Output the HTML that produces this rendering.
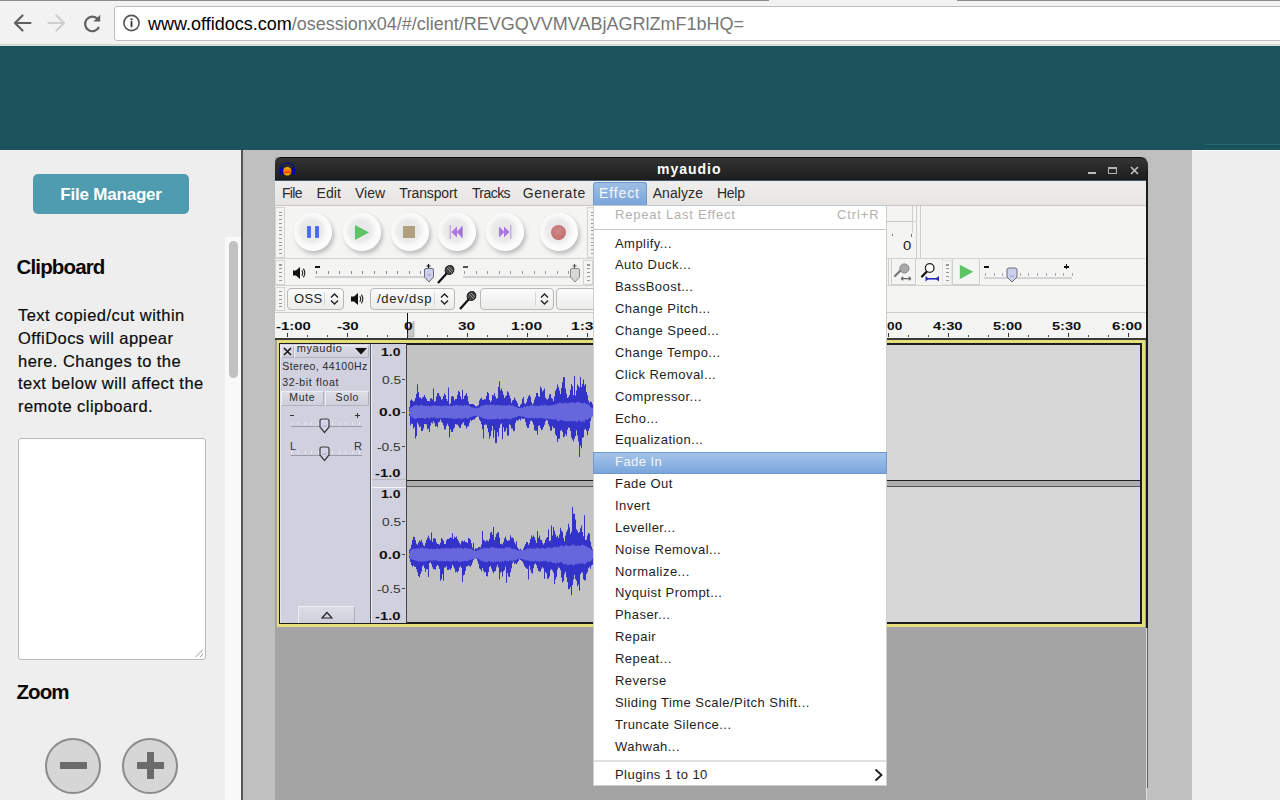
<!DOCTYPE html>
<html><head><meta charset="utf-8">
<style>

*{margin:0;padding:0;box-sizing:border-box}
html,body{width:1280px;height:800px;overflow:hidden;background:#eee;font-family:"Liberation Sans",sans-serif}
.a{position:absolute}
#chrome{left:0;top:0;width:1280px;height:46px;background:#f2f2f2}
#topline1{left:0;top:0;width:769px;height:1px;background:#8f8b8b}
#topline2{left:957px;top:0;width:323px;height:1px;background:#8f8b8b}
#addr{left:114px;top:6px;width:1180px;height:35px;background:#fff;border:1px solid #bdbdbd;border-radius:3px}
#url{left:148px;top:14px;font-size:18px;color:#000;white-space:nowrap}
#url span{color:#777}
#chromeb{left:0;top:44px;width:1280px;height:2px;background:linear-gradient(#d3cfcf 50%,#e4e0e0 50%)}
#teal{left:0;top:46px;width:1280px;height:104px;background:#1a535c}
#left{left:0;top:150px;width:241px;height:650px;background:#eeeeee}
#sep{left:241px;top:150px;width:2px;height:650px;background:#555}
#grey{left:243px;top:150px;width:949px;height:650px;background:#c0c0c0}
#right{left:1192px;top:150px;width:88px;height:650px;background:#eeeeee}
#fm{left:33px;top:174px;width:156px;height:40px;background:#4f9bb0;border-radius:5px;color:#fff;font-weight:bold;font-size:17px;text-align:center;line-height:42px;letter-spacing:-0.2px}


.t{position:absolute;white-space:nowrap;color:#0a0a0a}
#para{-webkit-text-stroke:0.2px #111}
#clip{left:16.5px;top:255px;font-size:20.5px;font-weight:bold;letter-spacing:-0.85px}
#para{left:18px;top:304px;font-size:16.5px;letter-spacing:0.45px;line-height:22.8px;white-space:normal;width:210px}
#para div{white-space:nowrap}
#ta{left:18px;top:438px;width:188px;height:222px;background:#fff;border:1px solid #b9b9b9;border-radius:3px}
#zoomh{left:16.5px;top:680px;font-size:20.5px;font-weight:bold;letter-spacing:-0.9px}
.zc{position:absolute;width:56px;height:56px;border-radius:50%;background:#d6d6d6;border:2px solid #8c8c8c}
.bar{position:absolute;background:#6b6b6b}
#track{left:225px;top:237px;width:16px;height:563px;background:#f9f9f9}
#thumb{left:229px;top:241px;width:9px;height:137px;background:#c2c2c2;border-radius:5px}

.w{position:absolute}
.au{font-family:"Liberation Sans",sans-serif;position:absolute;white-space:nowrap}
#win{left:275px;top:157px;width:871px;height:643px;background:#a4a4a4}
#winr{left:1146px;top:170px;width:1.5px;height:458px;background:#1a1a1a}
#winr2{left:1147px;top:628px;width:1px;height:160px;background:#5e5e5e}
#winr3{left:1146px;top:628px;width:1px;height:172px;background:#dcdcdc}
#title{left:275px;top:157px;width:872.5px;height:24px;background:linear-gradient(#343434,#2a2a2a 40%,#1c1c1c);border-top:1px solid #0a0a0a;border-radius:6px 8px 0 0}
#titleline{left:275px;top:180px;width:871px;height:1px;background:#3f5672}
#ttext{left:657px;top:161px;font-size:14px;font-weight:bold;color:#fff;letter-spacing:1px}
#menubar{left:275px;top:181px;width:871px;height:25px;background:linear-gradient(#efeeed,#e6e5e3);border-bottom:1px solid #c8c7c5}
.mi{position:absolute;top:185px;font-size:14px;color:#2a2a2a}
#effhl{left:593px;top:182px;width:54px;height:23px;background:linear-gradient(#9dbfe6,#79a5d8);border:1px solid #6f98cc;border-bottom:none;border-radius:3px 3px 0 0}
#tb{left:275px;top:206px;width:871px;height:106px;background:#f4f4f3}
.hl{position:absolute;height:1px;background:#cfcfcd}
.vl{position:absolute;width:1px;background:#cfcfcd}
.grip{position:absolute;width:10px;border:1px solid #d4d4d2;background:#f4f4f3}.grip:after{content:'';position:absolute;left:3px;right:2px;top:2px;bottom:2px;background:repeating-linear-gradient(#f4f4f3 0,#f4f4f3 1.5px,#9a9a9a 1.5px,#9a9a9a 2.5px,#f4f4f3 2.5px,#f4f4f3 3.75px)}
.btn{position:absolute;width:38px;height:38px;border-radius:50%;background:radial-gradient(circle at 46% 46%,#e6e6e6 0,#ebebeb 11px,#f6f6f6 14px,#fcfcfc 18px);box-shadow:2px 3px 4px #bcbcbc}
#ruler{left:275px;top:312px;width:871px;height:26px;background:#f4f4f3;border-top:1px solid #cdcdcb}
#rulerb{left:275px;top:338px;width:871px;height:2px;background:#3a3a3a}
.rn{position:absolute;top:320px;font-size:11px;font-weight:bold;color:#111;transform-origin:0 0}
.tick{position:absolute;width:1px;background:#444}
#trk{left:277px;top:340px;width:867.5px;height:287px;background:#e3df7c}
#trkin{left:279px;top:343px;width:862.5px;height:281px;background:#1c1c1c}
.info{position:absolute;background:#d0d0de}
.vr{position:absolute;background:#d0d0de}
.wbg{position:absolute;background:#c3c3c3}
.obg{position:absolute;background:#d7d7d7}
.vrt{position:absolute;font-size:11px;color:#333;transform-origin:0 0}
.vrb{position:absolute;font-size:11px;font-weight:bold;color:#111;transform-origin:0 0}
.it{position:absolute;font-size:10px;color:#2a2a2a;white-space:nowrap}
.pbtn{position:absolute;background:linear-gradient(#dcdce6,#cfcfdc);border:1px solid #b0b0c0;border-top-color:#eeeef4;border-left-color:#eeeef4}
#menu{left:593px;top:205px;width:294px;height:581px;background:#fff;border:1px solid #cfcfcf;border-top:1px solid #b9c6d6}
.me{position:absolute;left:615px;font-size:13px;color:#1e1e1e;letter-spacing:0.4px}
#fadehl{left:593px;top:452px;width:294px;height:22px;background:linear-gradient(#a4c3ea,#7aa6db);border:1px solid #6e99cf}
.combo{position:absolute;height:22px;border:1px solid #b8b8b6;border-radius:4px;background:linear-gradient(#fbfbfb,#ececeb)}
.ct{position:absolute;font-size:13px;color:#222;letter-spacing:0.3px}

</style></head><body>

<div id="chrome" class="a"></div>
<div id="topline1" class="a"></div>
<div id="topline2" class="a"></div>
<div id="addr" class="a"></div>
<div id="url" class="a">www.offidocs.com<span>/osessionx04/#/client/REVGQVVMVABjAGRlZmF1bHQ=</span></div>
<div id="chromeb" class="a"></div>
<svg class="a" style="left:0;top:0" width="150" height="45" viewBox="0 0 150 45">
<path d="M22.5 15.5 L15 23 L22.5 30.5 M15 23 H30.5" stroke="#606060" stroke-width="2.2" fill="none" stroke-linecap="round" stroke-linejoin="round"/>
<path d="M56.5 15.5 L64 23 L56.5 30.5 M64 23 H48.5" stroke="#cfcfcf" stroke-width="2.2" fill="none" stroke-linecap="round" stroke-linejoin="round"/>
<path d="M99 27 A7.3 7.3 0 1 1 97.6 18.8" stroke="#606060" stroke-width="2.2" fill="none"/>
<path d="M100.2 14.8 V21.6 H93.4 Z" fill="#606060"/>
<circle cx="131.5" cy="23" r="7.6" stroke="#555" stroke-width="1.6" fill="none"/>
<circle cx="131.5" cy="19.3" r="1.1" fill="#333"/>
<rect x="130.6" y="21.2" width="1.8" height="6" fill="#333"/>
</svg>
<div id="teal" class="a"></div>
<div id="left" class="a"></div>
<div id="sep" class="a"></div>
<div id="grey" class="a"></div>
<div id="right" class="a"></div>
<div class="a" style="left:1206px;top:144px;width:74px;height:1px;background:#2b6a73"></div>
<div class="a" style="left:1206px;top:145px;width:74px;height:1px;background:#154a52"></div>
<div class="a" style="left:1192px;top:150px;width:88px;height:1px;background:#f8f8f8"></div>
<div id="fm" class="a">File Manager</div>

<div id="track" class="a"></div>
<div id="thumb" class="a"></div>
<div id="clip" class="t">Clipboard</div>
<div id="para" class="t"><div>Text copied/cut within</div><div>OffiDocs will appear</div><div>here. Changes to the</div><div>text below will affect the</div><div>remote clipboard.</div></div>
<div id="ta" class="a"></div>
<svg class="a" style="left:194px;top:648px" width="10" height="10" viewBox="0 0 10 10"><path d="M1.5 9 L9 1.5 M6 9 L9 6" stroke="#9a9a9a" stroke-width="1"/></svg>
<div id="zoomh" class="t">Zoom</div>
<div class="zc" style="left:45px;top:738px"></div>
<div class="bar" style="left:60px;top:762px;width:27px;height:7px"></div>
<div class="zc" style="left:122px;top:738px"></div>
<div class="bar" style="left:137px;top:762px;width:27px;height:7px"></div>
<div class="bar" style="left:147px;top:752px;width:7px;height:27px"></div>


<div id="win" class="w"></div>
<div id="title" class="w"></div>
<div id="titleline" class="w"></div>
<svg class="w" style="left:279px;top:162px" width="17" height="15" viewBox="0 0 17 15">
<defs><linearGradient id="blob" x1="0" y1="0" x2="0" y2="1"><stop offset="0" stop-color="#f0b400"/><stop offset="0.45" stop-color="#f07a00"/><stop offset="0.62" stop-color="#f03c08"/><stop offset="0.8" stop-color="#f0a000"/><stop offset="1" stop-color="#f0d000"/></linearGradient></defs>
<path d="M2 8 C1.8 3 4.6 0.9 8.5 0.9 C12.4 0.9 15.2 3 15 8" fill="none" stroke="#0e1478" stroke-width="1.5"/>
<ellipse cx="2.5" cy="9" rx="1.9" ry="3.8" fill="#0204a8"/>
<ellipse cx="14.5" cy="9" rx="1.9" ry="3.8" fill="#0204a8"/>
<ellipse cx="8.3" cy="9.3" rx="4.2" ry="4.3" fill="url(#blob)"/>
</svg>
<div id="ttext" class="au">myaudio</div>
<div class="w" style="left:1088px;top:172px;width:8px;height:2px;background:#bdbdbd"></div>
<div class="w" style="left:1108px;top:166.5px;width:9px;height:7.5px;border:1.5px solid #b4b4b4;border-top-width:2px"></div>
<svg class="w" style="left:1129.5px;top:166px" width="9" height="9" viewBox="0 0 9 9"><path d="M1 1 L8 8 M8 1 L1 8" stroke="#c4c4c4" stroke-width="1.6"/></svg>
<div id="winr" class="w"></div><div id="winr2" class="w"></div><div id="winr3" class="w"></div>
<div id="menubar" class="w"></div>
<div id="effhl" class="w"></div>
<div id="tb" class="w"></div>
<!-- toolbar rows -->
<div class="hl" style="left:275px;top:258px;width:870px;background:#d2d2d0"></div>
<div class="hl" style="left:275px;top:285px;width:870px;background:#d2d2d0"></div>
<div class="grip" style="left:275px;top:207px;height:51px"></div>
<div class="grip" style="left:275px;top:260px;height:25px"></div>
<div class="grip" style="left:275px;top:287px;height:24px"></div>
<div class="grip" style="left:587px;top:207px;height:51px"></div>
<div class="grip" style="left:583px;top:260px;height:25px"></div>
<!-- transport buttons -->
<div class="btn" style="left:294px;top:213px"></div>
<div class="btn" style="left:343px;top:213px"></div>
<div class="btn" style="left:391px;top:213px"></div>
<div class="btn" style="left:438px;top:213px"></div>
<div class="btn" style="left:486px;top:213px"></div>
<div class="btn" style="left:540px;top:213px"></div>
<div class="w" style="left:307px;top:226px;width:4px;height:12px;background:#4c6ee8;border-radius:1px"></div>
<div class="w" style="left:315px;top:226px;width:4px;height:12px;background:#4c6ee8;border-radius:1px"></div>
<svg class="w" style="left:354px;top:224px" width="16" height="17" viewBox="0 0 16 17"><path d="M1 1 L15 8.5 L1 16 Z" fill="#5cc464"/></svg>
<div class="w" style="left:403px;top:226px;width:12px;height:12px;background:#b0a080"></div>
<svg class="w" style="left:449px;top:225px" width="15" height="14" viewBox="0 0 15 14"><rect x="0.5" y="0" width="1.6" height="14" fill="#c8a8f0"/><path d="M2.5 7 L8 1.5 L8 12.5 Z M7.5 7 L13 1.5 L13 12.5 Z" fill="#a878e0"/><rect x="12.5" y="1" width="1.5" height="12" fill="#604080" opacity="0.4"/></svg>
<svg class="w" style="left:497px;top:225px" width="15" height="14" viewBox="0 0 15 14"><rect x="12.9" y="0" width="1.6" height="14" fill="#c8a8f0"/><path d="M12.5 7 L7 1.5 L7 12.5 Z M7.5 7 L2 1.5 L2 12.5 Z" fill="#a878e0"/></svg>
<div class="w" style="left:551px;top:225px;width:15px;height:15px;border-radius:50%;background:radial-gradient(circle at 45% 40%,#d08888,#c07070 70%,#a05858)"></div>
<!-- mixer row -->
<svg class="w" style="left:292px;top:266px" width="14" height="14" viewBox="0 0 14 14"><path d="M1 4.5 H4 L8 1 V13 L4 9.5 H1 Z" fill="#111"/><path d="M9.8 4.2 Q11.6 7 9.8 9.8 M11.4 2.6 Q14.2 7 11.4 11.4" stroke="#222" stroke-width="1.1" fill="none"/></svg>
<div class="w" style="left:315px;top:266px;width:5px;height:1.5px;background:#111"></div>
<div class="w" style="left:315px;top:276px;width:117px;height:2px;background:#d2d2d2"></div>
<div class="w" style="left:316px;top:271px;width:116px;height:3px;background:repeating-linear-gradient(90deg,#888 0,#888 1px,transparent 1px,transparent 11.6px)"></div>
<svg class="w" style="left:423px;top:264px" width="12" height="20" viewBox="0 0 12 20"><path d="M3.5 2 H7.5 M5.5 0 V4" stroke="#111" stroke-width="1.2"/><path d="M1.5 6 Q1.5 4.5 3 4.5 H9 Q10.5 4.5 10.5 6 V13 L6 18 L1.5 13 Z" fill="#ccd0ea" stroke="#6a6a7a" stroke-width="1"/><path d="M4 11 H8" stroke="#9aa0c0"/></svg>
<svg class="w" style="left:436px;top:264px" width="20" height="20" viewBox="0 0 20 20"><path d="M2 19 L11 9" stroke="#111" stroke-width="2.2"/><ellipse cx="13.5" cy="6" rx="4.2" ry="4.6" transform="rotate(45 13.5 6)" fill="#444" stroke="#111" stroke-width="1"/><path d="M11 4 L16 9 M12.5 2.8 L17 7.2" stroke="#aaa" stroke-width="0.8"/></svg>
<div class="w" style="left:463px;top:266px;width:5px;height:1.5px;background:#555"></div>
<div class="w" style="left:463px;top:276px;width:113px;height:2px;background:#d2d2d2"></div>
<div class="w" style="left:464px;top:271px;width:110px;height:3px;background:repeating-linear-gradient(90deg,#999 0,#999 1px,transparent 1px,transparent 11.6px)"></div>
<svg class="w" style="left:569px;top:264px" width="12" height="20" viewBox="0 0 12 20"><path d="M3.5 2 H7.5 M5.5 0 V4" stroke="#555" stroke-width="1.2"/><path d="M1.5 6 Q1.5 4.5 3 4.5 H9 Q10.5 4.5 10.5 6 V13 L6 18 L1.5 13 Z" fill="#d8d8d8" stroke="#8a8a8a" stroke-width="1"/></svg>
<!-- device row -->
<div class="combo" style="left:287px;top:288px;width:57px"></div>
<div class="vl" style="left:324px;top:292px;height:14px;background:#d8d8d8"></div>
<div class="ct" style="left:294px;top:291px">OSS</div>
<svg class="w" style="left:330px;top:293px" width="9" height="12" viewBox="0 0 9 12"><path d="M1 4.5 L4.5 1 L8 4.5 M1 7.5 L4.5 11 L8 7.5" stroke="#222" stroke-width="1.4" fill="none"/></svg>
<svg class="w" style="left:350px;top:292px" width="14" height="14" viewBox="0 0 14 14"><path d="M1 4.5 H4 L8 1 V13 L4 9.5 H1 Z" fill="#111"/><path d="M9.8 4.2 Q11.6 7 9.8 9.8 M11.4 2.6 Q14.2 7 11.4 11.4" stroke="#222" stroke-width="1.1" fill="none"/></svg>
<div class="combo" style="left:370px;top:288px;width:85px"></div>
<div class="vl" style="left:434px;top:292px;height:14px;background:#d8d8d8"></div>
<div class="ct" style="left:377px;top:291px;letter-spacing:0.75px">/dev/dsp</div>
<svg class="w" style="left:440px;top:293px" width="9" height="12" viewBox="0 0 9 12"><path d="M1 4.5 L4.5 1 L8 4.5 M1 7.5 L4.5 11 L8 7.5" stroke="#222" stroke-width="1.4" fill="none"/></svg>
<svg class="w" style="left:458px;top:290px" width="20" height="20" viewBox="0 0 20 20"><path d="M2 19 L11 9" stroke="#111" stroke-width="2.2"/><ellipse cx="13.5" cy="6" rx="4.2" ry="4.6" transform="rotate(45 13.5 6)" fill="#444" stroke="#111" stroke-width="1"/><path d="M11 4 L16 9 M12.5 2.8 L17 7.2" stroke="#aaa" stroke-width="0.8"/></svg>
<div class="combo" style="left:480px;top:288px;width:74px"></div>
<div class="vl" style="left:535px;top:292px;height:14px;background:#d8d8d8"></div>
<svg class="w" style="left:540px;top:293px" width="9" height="12" viewBox="0 0 9 12"><path d="M1 4.5 L4.5 1 L8 4.5 M1 7.5 L4.5 11 L8 7.5" stroke="#222" stroke-width="1.4" fill="none"/></svg>
<div class="combo" style="left:556px;top:288px;width:60px"></div>
<!-- ruler -->
<div id="ruler" class="w"></div>
<div id="rulerb" class="w"></div>
<div class="w" style="left:407px;top:313px;width:1px;height:25px;background:#111"></div>
<svg class="w" style="left:408px;top:320px" width="7" height="18" viewBox="0 0 7 18"><path d="M0 8 L6 1 V17 H0 Z" fill="#c8c8c8" stroke="#a0a0a0" stroke-width="0.6"/></svg>
<!-- track -->
<div id="trk" class="w"></div>
<div id="trkin" class="w"></div>
<div class="info" style="left:280px;top:344px;width:90px;height:279px"></div><div class="w" style="left:280px;top:344px;width:1px;height:279px;background:#e4e4ee"></div>
<div class="w" style="left:370px;top:344px;width:1px;height:279px;background:#555"></div>
<div class="w" style="left:371px;top:344px;width:1px;height:279px;background:#eeeef4"></div>
<div class="vr" style="left:372px;top:344px;width:34px;height:279px"></div>
<div class="w" style="left:406px;top:344px;width:1px;height:279px;background:#444"></div>
<div class="wbg" style="left:407px;top:345px;width:733px;height:135px"></div>
<div class="wbg" style="left:407px;top:487px;width:733px;height:135px"></div>
<div class="obg" style="left:600px;top:345px;width:540px;height:135px"></div>
<div class="obg" style="left:600px;top:487px;width:540px;height:135px"></div>
<div class="w" style="left:407px;top:481px;width:733px;height:5px;background:#adadad"></div>
<div class="w" style="left:407px;top:486px;width:733px;height:1px;background:#555"></div>
<div class="w" style="left:372px;top:479px;width:34px;height:1px;background:#b8b8c0"></div>
<div class="w" style="left:372px;top:487px;width:34px;height:1px;background:#f4f4f8"></div>
<!-- info panel contents -->
<div class="pbtn" style="left:281px;top:345px;width:13px;height:13px"></div>
<svg class="w" style="left:283px;top:347px" width="9" height="9" viewBox="0 0 9 9"><path d="M1 1 L8 8 M8 1 L1 8" stroke="#111" stroke-width="1.5"/></svg>
<div class="pbtn" style="left:294px;top:345px;width:75px;height:13px"></div>

<svg class="w" style="left:355px;top:348px" width="12" height="7" viewBox="0 0 12 7"><path d="M0 0 H12 L6 6.5 Z" fill="#111"/></svg>


<div class="pbtn" style="left:281px;top:391px;width:43px;height:15px"></div>
<div class="pbtn" style="left:325px;top:391px;width:44px;height:15px"></div>


<div class="w" style="left:290px;top:415px;width:4px;height:1px;background:#333"></div>
<div class="w" style="left:355px;top:415px;width:5px;height:1px;background:#333"></div>
<div class="w" style="left:357px;top:413px;width:1px;height:5px;background:#333"></div>
<div class="w" style="left:291px;top:426px;width:71px;height:1px;background:#9a9aa8"></div>
<div class="w" style="left:291px;top:422px;width:71px;height:3px;background:repeating-linear-gradient(90deg,#eaeaf0 0,#eaeaf0 1px,transparent 1px,transparent 6.8px)"></div>
<svg class="w" style="left:319px;top:418px" width="11" height="16" viewBox="0 0 11 16"><path d="M1 3 Q1 1 3 1 H8 Q10 1 10 3 V9 L5.5 14.5 L1 9 Z" fill="#d4d4e8" stroke="#3a3a3a" stroke-width="1.2"/><path d="M3.5 8 H7.5" stroke="#a0a0c0"/></svg>
<div class="it" style="left:290px;top:440px;font-size:11px;color:#333">L</div>
<div class="it" style="left:354px;top:440px;font-size:11px;color:#333">R</div>
<div class="w" style="left:291px;top:455px;width:71px;height:1px;background:#9a9aa8"></div>
<div class="w" style="left:291px;top:451px;width:71px;height:3px;background:repeating-linear-gradient(90deg,#eaeaf0 0,#eaeaf0 1px,transparent 1px,transparent 6.8px)"></div>
<svg class="w" style="left:319px;top:446px" width="11" height="16" viewBox="0 0 11 16"><path d="M1 3 Q1 1 3 1 H8 Q10 1 10 3 V9 L5.5 14.5 L1 9 Z" fill="#d4d4e8" stroke="#3a3a3a" stroke-width="1.2"/><path d="M3.5 8 H7.5" stroke="#a0a0c0"/></svg>
<div class="pbtn" style="left:298px;top:606px;width:57px;height:17px;border-bottom:none"></div>
<svg class="w" style="left:321px;top:611px" width="12" height="8" viewBox="0 0 12 8"><path d="M1 7 L6 1.5 L11 7 Z" fill="none" stroke="#222" stroke-width="1.2"/></svg>
<!-- right toolbar parts -->
<div class="w" style="left:887px;top:221px;width:28px;height:1px;background:#c8c8c6"></div>
<div class="w" style="left:912px;top:206px;width:1px;height:27px;background:#d0d0ce"></div>
<div class="w" style="left:892px;top:234px;width:1px;height:2px;background:#777"></div>
<div class="w" style="left:911px;top:234px;width:1px;height:3px;background:#777"></div>
<div class="au" style="left:903px;top:238px;font-size:13.5px;color:#1a1a1a;transform:scaleX(1.1);transform-origin:0 0">0</div>
<div class="w" style="left:916px;top:206px;width:1px;height:52px;background:#cfcfcd"></div>
<div class="w" style="left:920px;top:206px;width:1px;height:52px;background:#cfcfcd"></div>
<div class="w" style="left:888px;top:259px;width:1px;height:26px;background:#cfcfcd"></div>
<div class="w" style="left:891px;top:259px;width:25px;height:26px;border:1px solid #cfcfcd;border-top:none"></div>
<div class="w" style="left:916px;top:259px;width:27px;height:26px;border-right:1px solid #cfcfcd"></div>
<div class="grip" style="left:942px;top:260px;height:25px;border-color:#e4e4e2"></div>
<div class="w" style="left:952px;top:259px;width:28px;height:26px;border:1px solid #cfcfcd;border-top:none"></div>
<svg class="w" style="left:891px;top:259px" width="52" height="26" viewBox="0 0 52 26">
<path d="M4 17 L10 11" stroke="#777" stroke-width="2.2" stroke-linecap="round"/>
<circle cx="13.4" cy="9.5" r="4.6" fill="#a8a8a8" stroke="#888" stroke-width="1"/>
<path d="M10 19.6 H20 M10 19.6 L12.3 17.8 M10 19.6 L12.3 21.4 M20 19.6 L17.7 17.8 M20 19.6 L17.7 21.4" stroke="#666" stroke-width="1.1" fill="none"/>
<path d="M31 17.5 L36.3 12" stroke="#111" stroke-width="2.2" stroke-linecap="round"/>
<circle cx="38.7" cy="9" r="4.3" fill="#fff" stroke="#222" stroke-width="1.3"/>
<path d="M35 19.8 H47.5" stroke="#2828b8" stroke-width="1.6"/>
<path d="M34.5 17 V22.5 L38 19.8 Z M48 17 V22.5 L44.5 19.8 Z" fill="#2828b8"/>
</svg>
<svg class="w" style="left:959px;top:264px" width="15" height="16" viewBox="0 0 15 16"><path d="M0.8 0.8 L14.2 7.8 L0.8 15.2 Z" fill="#5cc464"/></svg>
<div class="w" style="left:984px;top:266px;width:5px;height:1.5px;background:#111"></div>
<div class="w" style="left:1064px;top:266px;width:5px;height:1.5px;background:#111"></div>
<div class="w" style="left:1066px;top:264px;width:1px;height:5px;background:#111"></div>
<div class="w" style="left:984px;top:277px;width:88px;height:2px;background:#d4d4d4"></div>
<div class="w" style="left:985px;top:273px;width:88px;height:3px;background:repeating-linear-gradient(90deg,#aaa 0,#aaa 1px,transparent 1px,transparent 8.7px)"></div>
<svg class="w" style="left:1006px;top:267px" width="12" height="16" viewBox="0 0 12 16"><path d="M1 3 Q1 1 3 1 H9 Q11 1 11 3 V10 L6 15 L1 10 Z" fill="#ccd0ea" stroke="#6a6a7a" stroke-width="1"/><path d="M4 9 H8" stroke="#9aa0c0"/></svg>

<div class="mi" style="left:282px;letter-spacing:-0.686px">File</div>
<div class="mi" style="left:316.5px;letter-spacing:0.125px">Edit</div>
<div class="mi" style="left:355px;letter-spacing:-0.031px">View</div>
<div class="mi" style="left:399.2px;letter-spacing:-0.161px">Transport</div>
<div class="mi" style="left:471.9px;letter-spacing:-0.556px">Tracks</div>
<div class="mi" style="left:522.7px;letter-spacing:0.59px">Generate</div>
<div class="mi" style="left:652.7px;letter-spacing:0.082px">Analyze</div>
<div class="mi" style="left:717px;letter-spacing:-0.264px">Help</div>
<div class="mi" style="left:599px;color:#f4f8fd;letter-spacing:0.892px">Effect</div>
<div class="tick" style="left:287px;top:333px;height:4px;background:#333"></div>
<div class="tick" style="left:307px;top:335px;height:2px;background:#555"></div>
<div class="tick" style="left:327px;top:335px;height:2px;background:#555"></div>
<div class="tick" style="left:347px;top:333px;height:4px;background:#333"></div>
<div class="tick" style="left:367px;top:335px;height:2px;background:#555"></div>
<div class="tick" style="left:387px;top:335px;height:2px;background:#555"></div>
<div class="tick" style="left:407px;top:333px;height:4px;background:#333"></div>
<div class="tick" style="left:427px;top:335px;height:2px;background:#555"></div>
<div class="tick" style="left:447px;top:335px;height:2px;background:#555"></div>
<div class="tick" style="left:467px;top:333px;height:4px;background:#333"></div>
<div class="tick" style="left:487px;top:335px;height:2px;background:#555"></div>
<div class="tick" style="left:507px;top:335px;height:2px;background:#555"></div>
<div class="tick" style="left:527px;top:333px;height:4px;background:#333"></div>
<div class="tick" style="left:547px;top:335px;height:2px;background:#555"></div>
<div class="tick" style="left:567px;top:335px;height:2px;background:#555"></div>
<div class="tick" style="left:587px;top:333px;height:4px;background:#333"></div>
<div class="tick" style="left:607px;top:335px;height:2px;background:#555"></div>
<div class="tick" style="left:627px;top:335px;height:2px;background:#555"></div>
<div class="tick" style="left:647px;top:333px;height:4px;background:#333"></div>
<div class="tick" style="left:667px;top:335px;height:2px;background:#555"></div>
<div class="tick" style="left:687px;top:335px;height:2px;background:#555"></div>
<div class="tick" style="left:707px;top:333px;height:4px;background:#333"></div>
<div class="tick" style="left:727px;top:335px;height:2px;background:#555"></div>
<div class="tick" style="left:747px;top:335px;height:2px;background:#555"></div>
<div class="tick" style="left:767px;top:333px;height:4px;background:#333"></div>
<div class="tick" style="left:788px;top:335px;height:2px;background:#555"></div>
<div class="tick" style="left:808px;top:335px;height:2px;background:#555"></div>
<div class="tick" style="left:828px;top:333px;height:4px;background:#333"></div>
<div class="tick" style="left:848px;top:335px;height:2px;background:#555"></div>
<div class="tick" style="left:868px;top:335px;height:2px;background:#555"></div>
<div class="tick" style="left:888px;top:333px;height:4px;background:#333"></div>
<div class="tick" style="left:908px;top:335px;height:2px;background:#555"></div>
<div class="tick" style="left:928px;top:335px;height:2px;background:#555"></div>
<div class="tick" style="left:948px;top:333px;height:4px;background:#333"></div>
<div class="tick" style="left:968px;top:335px;height:2px;background:#555"></div>
<div class="tick" style="left:988px;top:335px;height:2px;background:#555"></div>
<div class="tick" style="left:1008px;top:333px;height:4px;background:#333"></div>
<div class="tick" style="left:1028px;top:335px;height:2px;background:#555"></div>
<div class="tick" style="left:1048px;top:335px;height:2px;background:#555"></div>
<div class="tick" style="left:1068px;top:333px;height:4px;background:#333"></div>
<div class="tick" style="left:1088px;top:335px;height:2px;background:#555"></div>
<div class="tick" style="left:1108px;top:335px;height:2px;background:#555"></div>
<div class="tick" style="left:1128px;top:333px;height:4px;background:#333"></div>
<div class="rn" style="left:276.2px;transform:scaleX(1.355)">-1:00</div>
<div class="rn" style="left:336.7px;transform:scaleX(1.365)">-30</div>
<div class="rn" style="left:403.59999999999997px;transform:scaleX(1.422)">0</div>
<div class="rn" style="left:458.2px;transform:scaleX(1.406)">30</div>
<div class="rn" style="left:511.2px;transform:scaleX(1.417)">1:00</div>
<div class="rn" style="left:571.2px;transform:scaleX(1.417)">1:30</div>
<div class="rn" style="left:875.2px;transform:scaleX(1.235)">4:00</div>
<div class="rn" style="left:933.2px;transform:scaleX(1.344)">4:30</div>
<div class="rn" style="left:993.2px;transform:scaleX(1.326)">5:00</div>
<div class="rn" style="left:1052.2px;transform:scaleX(1.326)">5:30</div>
<div class="rn" style="left:1112.2px;transform:scaleX(1.372)">6:00</div>
<div class="vrb" style="left:380.95px;top:346.0px;transform:scaleX(1.272)">1.0</div>
<div class="vrt" style="left:381.8px;top:373.5px;transform:scaleX(1.249)">0.5</div>
<div class="w" style="left:402px;top:379px;width:3px;height:1px;background:#444"></div>
<div class="vrb" style="left:379.2px;top:406.4px;transform:scaleX(1.419)">0.0</div>
<div class="w" style="left:402px;top:412px;width:3px;height:1px;background:#444"></div>
<div class="vrt" style="left:377.2px;top:440.5px;transform:scaleX(1.250)">-0.5</div>
<div class="w" style="left:402px;top:446px;width:3px;height:1px;background:#444"></div>
<div class="vrb" style="left:374.95px;top:467.0px;transform:scaleX(1.343)">-1.0</div>
<div class="vrb" style="left:380.95px;top:488.2px;transform:scaleX(1.272)">1.0</div>
<div class="vrt" style="left:381.8px;top:515.5px;transform:scaleX(1.249)">0.5</div>
<div class="w" style="left:402px;top:521px;width:3px;height:1px;background:#444"></div>
<div class="vrb" style="left:379.2px;top:548.9px;transform:scaleX(1.419)">0.0</div>
<div class="w" style="left:402px;top:554px;width:3px;height:1px;background:#444"></div>
<div class="vrt" style="left:377.2px;top:582.9px;transform:scaleX(1.250)">-0.5</div>
<div class="w" style="left:402px;top:588px;width:3px;height:1px;background:#444"></div>
<div class="vrb" style="left:374.95px;top:609.5px;transform:scaleX(1.343)">-1.0</div>
<svg class="w" style="left:0;top:0" width="1280" height="800" viewBox="0 0 1280 800"><path d="M409.0 407.0 L410.0 407.0 L410.0 400.4 L411.0 400.4 L411.0 399.5 L412.0 399.5 L412.0 400.5 L413.0 400.5 L413.0 401.8 L414.0 401.8 L414.0 400.7 L415.0 400.7 L415.0 398.0 L416.0 398.0 L416.0 393.9 L417.0 393.9 L417.0 384.3 L418.0 384.3 L418.0 392.3 L419.0 392.3 L419.0 397.6 L420.0 397.6 L420.0 397.4 L421.0 397.4 L421.0 399.1 L422.0 399.1 L422.0 397.6 L423.0 397.6 L423.0 396.7 L424.0 396.7 L424.0 395.1 L425.0 395.1 L425.0 397.2 L426.0 397.2 L426.0 399.1 L427.0 399.1 L427.0 401.1 L428.0 401.1 L428.0 401.1 L429.0 401.1 L429.0 401.2 L430.0 401.2 L430.0 398.6 L431.0 398.6 L431.0 398.2 L432.0 398.2 L432.0 399.6 L433.0 399.6 L433.0 388.5 L434.0 388.5 L434.0 401.8 L435.0 401.8 L435.0 400.9 L436.0 400.9 L436.0 396.6 L437.0 396.6 L437.0 393.3 L438.0 393.3 L438.0 392.9 L439.0 392.9 L439.0 395.5 L440.0 395.5 L440.0 396.7 L441.0 396.7 L441.0 399.4 L442.0 399.4 L442.0 399.0 L443.0 399.0 L443.0 396.1 L444.0 396.1 L444.0 393.4 L445.0 393.4 L445.0 394.9 L446.0 394.9 L446.0 399.0 L447.0 399.0 L447.0 401.0 L448.0 401.0 L448.0 387.5 L449.0 387.5 L449.0 404.6 L450.0 404.6 L450.0 402.9 L451.0 402.9 L451.0 396.5 L452.0 396.5 L452.0 396.0 L453.0 396.0 L453.0 396.8 L454.0 396.8 L454.0 400.6 L455.0 400.6 L455.0 399.1 L456.0 399.1 L456.0 398.9 L457.0 398.9 L457.0 395.1 L458.0 395.1 L458.0 391.1 L459.0 391.1 L459.0 391.8 L460.0 391.8 L460.0 396.2 L461.0 396.2 L461.0 399.2 L462.0 399.2 L462.0 389.8 L463.0 389.8 L463.0 399.0 L464.0 399.0 L464.0 396.0 L465.0 396.0 L465.0 394.9 L466.0 394.9 L466.0 393.0 L467.0 393.0 L467.0 396.2 L468.0 396.2 L468.0 401.7 L469.0 401.7 L469.0 404.2 L470.0 404.2 L470.0 404.0 L471.0 404.0 L471.0 404.0 L472.0 404.0 L472.0 404.1 L473.0 404.1 L473.0 404.2 L474.0 404.2 L474.0 405.1 L475.0 405.1 L475.0 406.2 L476.0 406.2 L476.0 406.4 L477.0 406.4 L477.0 405.8 L478.0 405.8 L478.0 405.0 L479.0 405.0 L479.0 400.5 L480.0 400.5 L480.0 398.8 L481.0 398.8 L481.0 397.8 L482.0 397.8 L482.0 399.8 L483.0 399.8 L483.0 399.7 L484.0 399.7 L484.0 399.2 L485.0 399.2 L485.0 399.3 L486.0 399.3 L486.0 396.0 L487.0 396.0 L487.0 392.1 L488.0 392.1 L488.0 393.3 L489.0 393.3 L489.0 400.1 L490.0 400.1 L490.0 402.3 L491.0 402.3 L491.0 400.6 L492.0 400.6 L492.0 395.0 L493.0 395.0 L493.0 395.6 L494.0 395.6 L494.0 393.2 L495.0 393.2 L495.0 396.6 L496.0 396.6 L496.0 398.8 L497.0 398.8 L497.0 398.0 L498.0 398.0 L498.0 386.8 L499.0 386.8 L499.0 381.2 L500.0 381.2 L500.0 390.2 L501.0 390.2 L501.0 388.6 L502.0 388.6 L502.0 391.2 L503.0 391.2 L503.0 394.8 L504.0 394.8 L504.0 398.0 L505.0 398.0 L505.0 396.6 L506.0 396.6 L506.0 395.4 L507.0 395.4 L507.0 391.3 L508.0 391.3 L508.0 392.5 L509.0 392.5 L509.0 395.4 L510.0 395.4 L510.0 398.4 L511.0 398.4 L511.0 402.7 L512.0 402.7 L512.0 400.5 L513.0 400.5 L513.0 399.9 L514.0 399.9 L514.0 397.5 L515.0 397.5 L515.0 399.5 L516.0 399.5 L516.0 401.0 L517.0 401.0 L517.0 403.3 L518.0 403.3 L518.0 406.5 L519.0 406.5 L519.0 406.8 L520.0 406.8 L520.0 404.8 L521.0 404.8 L521.0 403.5 L522.0 403.5 L522.0 399.0 L523.0 399.0 L523.0 397.1 L524.0 397.1 L524.0 403.3 L525.0 403.3 L525.0 404.1 L526.0 404.1 L526.0 402.1 L527.0 402.1 L527.0 398.7 L528.0 398.7 L528.0 396.3 L529.0 396.3 L529.0 394.9 L530.0 394.9 L530.0 396.7 L531.0 396.7 L531.0 402.1 L532.0 402.1 L532.0 404.2 L533.0 404.2 L533.0 403.2 L534.0 403.2 L534.0 399.4 L535.0 399.4 L535.0 397.1 L536.0 397.1 L536.0 393.1 L537.0 393.1 L537.0 393.1 L538.0 393.1 L538.0 396.3 L539.0 396.3 L539.0 397.1 L540.0 397.1 L540.0 386.4 L541.0 386.4 L541.0 388.3 L542.0 388.3 L542.0 391.5 L543.0 391.5 L543.0 390.3 L544.0 390.3 L544.0 388.5 L545.0 388.5 L545.0 397.4 L546.0 397.4 L546.0 399.3 L547.0 399.3 L547.0 399.6 L548.0 399.6 L548.0 398.3 L549.0 398.3 L549.0 394.5 L550.0 394.5 L550.0 394.0 L551.0 394.0 L551.0 398.1 L552.0 398.1 L552.0 398.8 L553.0 398.8 L553.0 401.3 L554.0 401.3 L554.0 396.4 L555.0 396.4 L555.0 390.8 L556.0 390.8 L556.0 388.7 L557.0 388.7 L557.0 384.4 L558.0 384.4 L558.0 387.0 L559.0 387.0 L559.0 390.5 L560.0 390.5 L560.0 394.1 L561.0 394.1 L561.0 388.1 L562.0 388.1 L562.0 382.2 L563.0 382.2 L563.0 376.9 L564.0 376.9 L564.0 377.3 L565.0 377.3 L565.0 388.6 L566.0 388.6 L566.0 393.7 L567.0 393.7 L567.0 398.1 L568.0 398.1 L568.0 397.1 L569.0 397.1 L569.0 395.0 L570.0 395.0 L570.0 389.8 L571.0 389.8 L571.0 383.9 L572.0 383.9 L572.0 386.1 L573.0 386.1 L573.0 395.2 L574.0 395.2 L574.0 376.0 L575.0 376.0 L575.0 395.6 L576.0 395.6 L576.0 390.5 L577.0 390.5 L577.0 384.4 L578.0 384.4 L578.0 385.9 L579.0 385.9 L579.0 387.6 L580.0 387.6 L580.0 377.0 L581.0 377.0 L581.0 387.0 L582.0 387.0 L582.0 383.8 L583.0 383.8 L583.0 379.5 L584.0 379.5 L584.0 385.5 L585.0 385.5 L585.0 384.1 L586.0 384.1 L586.0 391.9 L587.0 391.9 L587.0 395.3 L588.0 395.3 L588.0 400.5 L589.0 400.5 L589.0 402.7 L590.0 402.7 L590.0 401.5 L591.0 401.5 L591.0 402.1 L592.0 402.1 L592.0 404.2 L593.0 404.2 L593.0 408.0 L594.0 408.0 L594.0 414.8 L593.0 414.8 L593.0 415.5 L592.0 415.5 L592.0 417.3 L591.0 417.3 L591.0 421.0 L590.0 421.0 L590.0 428.2 L589.0 428.2 L589.0 430.7 L588.0 430.7 L588.0 435.3 L587.0 435.3 L587.0 430.8 L586.0 430.8 L586.0 428.7 L585.0 428.7 L585.0 429.8 L584.0 429.8 L584.0 437.3 L583.0 437.3 L583.0 437.8 L582.0 437.8 L582.0 448.2 L581.0 448.2 L581.0 445.4 L580.0 445.4 L580.0 457.0 L579.0 457.0 L579.0 441.4 L578.0 441.4 L578.0 435.5 L577.0 435.5 L577.0 430.2 L576.0 430.2 L576.0 435.9 L575.0 435.9 L575.0 438.6 L574.0 438.6 L574.0 441.5 L573.0 441.5 L573.0 439.6 L572.0 439.6 L572.0 437.4 L571.0 437.4 L571.0 431.0 L570.0 431.0 L570.0 428.0 L569.0 428.0 L569.0 427.6 L568.0 427.6 L568.0 429.8 L567.0 429.8 L567.0 436.0 L566.0 436.0 L566.0 434.1 L565.0 434.1 L565.0 436.6 L564.0 436.6 L564.0 437.2 L563.0 437.2 L563.0 431.7 L562.0 431.7 L562.0 429.7 L561.0 429.7 L561.0 430.9 L560.0 430.9 L560.0 438.4 L559.0 438.4 L559.0 439.0 L558.0 439.0 L558.0 442.0 L557.0 442.0 L557.0 436.1 L556.0 436.1 L556.0 434.5 L555.0 434.5 L555.0 427.9 L554.0 427.9 L554.0 428.3 L553.0 428.3 L553.0 426.2 L552.0 426.2 L552.0 430.8 L551.0 430.8 L551.0 430.6 L550.0 430.6 L550.0 426.6 L549.0 426.6 L549.0 424.2 L548.0 424.2 L548.0 420.6 L547.0 420.6 L547.0 420.0 L546.0 420.0 L546.0 421.6 L545.0 421.6 L545.0 424.8 L544.0 424.8 L544.0 427.0 L543.0 427.0 L543.0 429.2 L542.0 429.2 L542.0 430.3 L541.0 430.3 L541.0 427.9 L540.0 427.9 L540.0 425.2 L539.0 425.2 L539.0 425.8 L538.0 425.8 L538.0 434.8 L537.0 434.8 L537.0 430.7 L536.0 430.7 L536.0 430.7 L535.0 430.7 L535.0 430.3 L534.0 430.3 L534.0 424.6 L533.0 424.6 L533.0 422.1 L532.0 422.1 L532.0 420.4 L531.0 420.4 L531.0 421.0 L530.0 421.0 L530.0 424.2 L529.0 424.2 L529.0 427.9 L528.0 427.9 L528.0 428.0 L527.0 428.0 L527.0 425.7 L526.0 425.7 L526.0 422.1 L525.0 422.1 L525.0 418.5 L524.0 418.5 L524.0 418.9 L523.0 418.9 L523.0 418.8 L522.0 418.8 L522.0 418.5 L521.0 418.5 L521.0 420.5 L520.0 420.5 L520.0 419.1 L519.0 419.1 L519.0 420.2 L518.0 420.2 L518.0 420.7 L517.0 420.7 L517.0 420.3 L516.0 420.3 L516.0 422.9 L515.0 422.9 L515.0 430.7 L514.0 430.7 L514.0 431.2 L513.0 431.2 L513.0 428.6 L512.0 428.6 L512.0 428.4 L511.0 428.4 L511.0 425.3 L510.0 425.3 L510.0 424.2 L509.0 424.2 L509.0 435.8 L508.0 435.8 L508.0 435.6 L507.0 435.6 L507.0 428.1 L506.0 428.1 L506.0 431.3 L505.0 431.3 L505.0 431.8 L504.0 431.8 L504.0 427.2 L503.0 427.2 L503.0 439.2 L502.0 439.2 L502.0 423.6 L501.0 423.6 L501.0 424.5 L500.0 424.5 L500.0 428.0 L499.0 428.0 L499.0 436.5 L498.0 436.5 L498.0 432.2 L497.0 432.2 L497.0 442.9 L496.0 442.9 L496.0 442.9 L495.0 442.9 L495.0 430.1 L494.0 430.1 L494.0 437.8 L493.0 437.8 L493.0 426.0 L492.0 426.0 L492.0 431.1 L491.0 431.1 L491.0 435.9 L490.0 435.9 L490.0 438.8 L489.0 438.8 L489.0 432.2 L488.0 432.2 L488.0 428.2 L487.0 428.2 L487.0 424.7 L486.0 424.7 L486.0 424.5 L485.0 424.5 L485.0 425.1 L484.0 425.1 L484.0 438.6 L483.0 438.6 L483.0 429.3 L482.0 429.3 L482.0 424.3 L481.0 424.3 L481.0 421.3 L480.0 421.3 L480.0 419.7 L479.0 419.7 L479.0 416.6 L478.0 416.6 L478.0 416.5 L477.0 416.5 L477.0 416.9 L476.0 416.9 L476.0 418.1 L475.0 418.1 L475.0 419.5 L474.0 419.5 L474.0 419.5 L473.0 419.5 L473.0 420.1 L472.0 420.1 L472.0 420.9 L471.0 420.9 L471.0 420.0 L470.0 420.0 L470.0 423.0 L469.0 423.0 L469.0 426.2 L468.0 426.2 L468.0 426.6 L467.0 426.6 L467.0 428.4 L466.0 428.4 L466.0 425.7 L465.0 425.7 L465.0 425.3 L464.0 425.3 L464.0 422.3 L463.0 422.3 L463.0 423.6 L462.0 423.6 L462.0 424.5 L461.0 424.5 L461.0 428.0 L460.0 428.0 L460.0 427.8 L459.0 427.8 L459.0 426.1 L458.0 426.1 L458.0 424.6 L457.0 424.6 L457.0 424.5 L456.0 424.5 L456.0 423.9 L455.0 423.9 L455.0 427.6 L454.0 427.6 L454.0 429.3 L453.0 429.3 L453.0 432.1 L452.0 432.1 L452.0 432.0 L451.0 432.0 L451.0 429.5 L450.0 429.5 L450.0 437.4 L449.0 437.4 L449.0 426.0 L448.0 426.0 L448.0 423.8 L447.0 423.8 L447.0 426.1 L446.0 426.1 L446.0 429.5 L445.0 429.5 L445.0 429.5 L444.0 429.5 L444.0 425.5 L443.0 425.5 L443.0 423.1 L442.0 423.1 L442.0 421.7 L441.0 421.7 L441.0 419.4 L440.0 419.4 L440.0 421.8 L439.0 421.8 L439.0 422.5 L438.0 422.5 L438.0 427.2 L437.0 427.2 L437.0 426.1 L436.0 426.1 L436.0 426.5 L435.0 426.5 L435.0 423.3 L434.0 423.3 L434.0 421.3 L433.0 421.3 L433.0 423.6 L432.0 423.6 L432.0 422.6 L431.0 422.6 L431.0 425.8 L430.0 425.8 L430.0 432.0 L429.0 432.0 L429.0 428.6 L428.0 428.6 L428.0 429.3 L427.0 429.3 L427.0 424.4 L426.0 424.4 L426.0 424.1 L425.0 424.1 L425.0 424.0 L424.0 424.0 L424.0 428.4 L423.0 428.4 L423.0 430.9 L422.0 430.9 L422.0 431.1 L421.0 431.1 L421.0 426.5 L420.0 426.5 L420.0 426.9 L419.0 426.9 L419.0 424.4 L418.0 424.4 L418.0 422.6 L417.0 422.6 L417.0 436.0 L416.0 436.0 L416.0 438.6 L415.0 438.6 L415.0 427.0 L414.0 427.0 L414.0 428.4 L413.0 428.4 L413.0 424.1 L412.0 424.1 L412.0 423.5 L411.0 423.5 L411.0 425.3 L410.0 425.3 L410.0 416.1 L409.0 416.1 Z" fill="#3333c9"/><path d="M409.5 408.6 L410.5 407.4 L411.5 407.2 L412.5 406.9 L413.5 406.0 L414.5 405.2 L415.5 405.6 L416.5 404.5 L417.5 405.5 L418.5 405.7 L419.5 405.4 L420.5 405.5 L421.5 404.8 L422.5 404.7 L423.5 406.3 L424.5 405.7 L425.5 406.3 L426.5 405.1 L427.5 406.5 L428.5 405.4 L429.5 405.9 L430.5 406.7 L431.5 406.0 L432.5 405.8 L433.5 405.4 L434.5 405.3 L435.5 405.7 L436.5 405.5 L437.5 406.2 L438.5 405.4 L439.5 405.4 L440.5 406.3 L441.5 406.6 L442.5 405.6 L443.5 406.0 L444.5 406.1 L445.5 405.1 L446.5 405.9 L447.5 405.8 L448.5 406.0 L449.5 406.1 L450.5 405.5 L451.5 406.2 L452.5 405.9 L453.5 405.2 L454.5 405.7 L455.5 405.1 L456.5 405.0 L457.5 404.8 L458.5 405.8 L459.5 406.3 L460.5 405.0 L461.5 405.2 L462.5 405.9 L463.5 405.9 L464.5 404.9 L465.5 405.5 L466.5 405.6 L467.5 405.0 L468.5 405.4 L469.5 405.7 L470.5 406.4 L471.5 407.4 L472.5 407.5 L473.5 407.6 L474.5 407.9 L475.5 408.4 L476.5 408.3 L477.5 408.1 L478.5 407.3 L479.5 407.4 L480.5 406.4 L481.5 405.2 L482.5 405.8 L483.5 404.8 L484.5 405.9 L485.5 404.6 L486.5 404.6 L487.5 405.2 L488.5 405.2 L489.5 404.6 L490.5 404.6 L491.5 404.5 L492.5 405.4 L493.5 404.2 L494.5 404.7 L495.5 405.6 L496.5 405.2 L497.5 404.9 L498.5 404.6 L499.5 405.9 L500.5 405.0 L501.5 404.9 L502.5 405.8 L503.5 405.2 L504.5 405.6 L505.5 405.5 L506.5 405.7 L507.5 405.5 L508.5 404.8 L509.5 405.4 L510.5 405.0 L511.5 405.7 L512.5 405.0 L513.5 405.9 L514.5 406.0 L515.5 407.0 L516.5 407.0 L517.5 407.7 L518.5 408.1 L519.5 408.1 L520.5 407.7 L521.5 407.7 L522.5 407.9 L523.5 407.0 L524.5 406.7 L525.5 406.6 L526.5 406.1 L527.5 405.9 L528.5 406.4 L529.5 406.0 L530.5 405.6 L531.5 405.2 L532.5 405.5 L533.5 405.4 L534.5 405.2 L535.5 406.2 L536.5 405.7 L537.5 406.0 L538.5 406.0 L539.5 406.1 L540.5 405.2 L541.5 404.9 L542.5 404.9 L543.5 406.1 L544.5 405.1 L545.5 404.6 L546.5 405.8 L547.5 405.8 L548.5 405.5 L549.5 405.4 L550.5 405.8 L551.5 405.0 L552.5 405.4 L553.5 404.2 L554.5 405.3 L555.5 403.9 L556.5 404.3 L557.5 403.3 L558.5 403.3 L559.5 402.6 L560.5 403.1 L561.5 402.3 L562.5 404.0 L563.5 402.5 L564.5 404.0 L565.5 402.0 L566.5 402.9 L567.5 403.4 L568.5 403.5 L569.5 402.7 L570.5 402.3 L571.5 403.1 L572.5 401.8 L573.5 402.6 L574.5 402.8 L575.5 403.3 L576.5 402.3 L577.5 402.6 L578.5 401.5 L579.5 401.9 L580.5 403.3 L581.5 403.3 L582.5 402.8 L583.5 403.8 L584.5 402.2 L585.5 403.6 L586.5 404.6 L587.5 403.2 L588.5 405.1 L589.5 405.4 L590.5 406.9 L591.5 407.5 L592.5 408.0 L593.5 408.6 L593.5 415.5 L592.5 416.4 L591.5 417.2 L590.5 417.4 L589.5 417.7 L588.5 419.6 L587.5 420.1 L586.5 419.6 L585.5 419.5 L584.5 421.7 L583.5 422.1 L582.5 420.3 L581.5 422.4 L580.5 421.2 L579.5 420.9 L578.5 419.8 L577.5 422.3 L576.5 422.2 L575.5 420.9 L574.5 420.9 L573.5 421.9 L572.5 420.6 L571.5 421.3 L570.5 421.0 L569.5 420.9 L568.5 421.3 L567.5 421.1 L566.5 421.7 L565.5 421.2 L564.5 420.9 L563.5 420.1 L562.5 421.6 L561.5 419.6 L560.5 420.0 L559.5 420.6 L558.5 421.4 L557.5 421.0 L556.5 420.0 L555.5 418.8 L554.5 419.5 L553.5 420.1 L552.5 419.2 L551.5 419.8 L550.5 418.3 L549.5 419.7 L548.5 418.6 L547.5 419.0 L546.5 418.8 L545.5 419.2 L544.5 418.3 L543.5 419.1 L542.5 417.8 L541.5 418.5 L540.5 417.6 L539.5 418.3 L538.5 417.9 L537.5 418.7 L536.5 417.9 L535.5 417.5 L534.5 418.8 L533.5 417.9 L532.5 418.3 L531.5 417.4 L530.5 418.5 L529.5 417.8 L528.5 418.5 L527.5 418.0 L526.5 418.1 L525.5 417.6 L524.5 416.9 L523.5 416.9 L522.5 416.1 L521.5 416.7 L520.5 416.4 L519.5 416.1 L518.5 415.9 L517.5 416.3 L516.5 417.4 L515.5 417.2 L514.5 417.2 L513.5 418.0 L512.5 418.2 L511.5 418.8 L510.5 419.3 L509.5 419.4 L508.5 419.0 L507.5 418.8 L506.5 418.5 L505.5 419.3 L504.5 418.2 L503.5 419.4 L502.5 418.8 L501.5 418.2 L500.5 419.7 L499.5 419.7 L498.5 418.7 L497.5 418.6 L496.5 419.0 L495.5 419.0 L494.5 419.6 L493.5 419.2 L492.5 418.9 L491.5 419.6 L490.5 419.3 L489.5 419.3 L488.5 419.4 L487.5 419.7 L486.5 418.4 L485.5 419.0 L484.5 418.7 L483.5 418.1 L482.5 418.5 L481.5 417.6 L480.5 417.1 L479.5 416.5 L478.5 416.0 L477.5 416.1 L476.5 415.6 L475.5 416.1 L474.5 416.1 L473.5 416.3 L472.5 416.6 L471.5 417.0 L470.5 417.2 L469.5 417.2 L468.5 418.7 L467.5 419.0 L466.5 418.3 L465.5 417.6 L464.5 418.4 L463.5 418.2 L462.5 418.8 L461.5 419.2 L460.5 417.9 L459.5 419.0 L458.5 417.8 L457.5 418.5 L456.5 418.7 L455.5 419.1 L454.5 418.6 L453.5 419.0 L452.5 418.7 L451.5 417.5 L450.5 418.8 L449.5 417.7 L448.5 418.7 L447.5 417.6 L446.5 418.4 L445.5 417.8 L444.5 417.6 L443.5 418.6 L442.5 418.0 L441.5 417.8 L440.5 418.4 L439.5 417.4 L438.5 418.4 L437.5 418.1 L436.5 417.9 L435.5 418.4 L434.5 417.3 L433.5 417.2 L432.5 418.0 L431.5 417.4 L430.5 417.6 L429.5 418.5 L428.5 418.2 L427.5 417.4 L426.5 417.7 L425.5 418.9 L424.5 419.1 L423.5 417.7 L422.5 418.0 L421.5 418.1 L420.5 418.1 L419.5 418.2 L418.5 418.1 L417.5 418.1 L416.5 418.7 L415.5 419.1 L414.5 418.6 L413.5 418.3 L412.5 417.7 L411.5 416.7 L410.5 416.0 L409.5 415.6 Z" fill="#6666dd"/><path d="M409.0 549.7 L410.0 549.7 L410.0 548.5 L411.0 548.5 L411.0 544.7 L412.0 544.7 L412.0 540.1 L413.0 540.1 L413.0 536.8 L414.0 536.8 L414.0 537.1 L415.0 537.1 L415.0 540.3 L416.0 540.3 L416.0 543.7 L417.0 543.7 L417.0 544.7 L418.0 544.7 L418.0 542.6 L419.0 542.6 L419.0 540.5 L420.0 540.5 L420.0 541.4 L421.0 541.4 L421.0 539.8 L422.0 539.8 L422.0 542.7 L423.0 542.7 L423.0 545.2 L424.0 545.2 L424.0 546.1 L425.0 546.1 L425.0 543.0 L426.0 543.0 L426.0 540.0 L427.0 540.0 L427.0 537.8 L428.0 537.8 L428.0 535.8 L429.0 535.8 L429.0 538.4 L430.0 538.4 L430.0 540.2 L431.0 540.2 L431.0 532.5 L432.0 532.5 L432.0 541.9 L433.0 541.9 L433.0 538.2 L434.0 538.2 L434.0 538.5 L435.0 538.5 L435.0 538.7 L436.0 538.7 L436.0 542.4 L437.0 542.4 L437.0 543.9 L438.0 543.9 L438.0 544.0 L439.0 544.0 L439.0 544.7 L440.0 544.7 L440.0 542.7 L441.0 542.7 L441.0 538.0 L442.0 538.0 L442.0 539.2 L443.0 539.2 L443.0 540.8 L444.0 540.8 L444.0 544.0 L445.0 544.0 L445.0 543.9 L446.0 543.9 L446.0 540.6 L447.0 540.6 L447.0 539.0 L448.0 539.0 L448.0 538.9 L449.0 538.9 L449.0 538.2 L450.0 538.2 L450.0 537.6 L451.0 537.6 L451.0 537.7 L452.0 537.7 L452.0 533.2 L453.0 533.2 L453.0 538.9 L454.0 538.9 L454.0 536.7 L455.0 536.7 L455.0 537.6 L456.0 537.6 L456.0 536.6 L457.0 536.6 L457.0 539.0 L458.0 539.0 L458.0 541.1 L459.0 541.1 L459.0 543.1 L460.0 543.1 L460.0 544.6 L461.0 544.6 L461.0 541.5 L462.0 541.5 L462.0 540.8 L463.0 540.8 L463.0 541.8 L464.0 541.8 L464.0 540.6 L465.0 540.6 L465.0 542.0 L466.0 542.0 L466.0 542.3 L467.0 542.3 L467.0 542.9 L468.0 542.9 L468.0 538.1 L469.0 538.1 L469.0 538.4 L470.0 538.4 L470.0 539.8 L471.0 539.8 L471.0 543.2 L472.0 543.2 L472.0 547.4 L473.0 547.4 L473.0 542.8 L474.0 542.8 L474.0 549.8 L475.0 549.8 L475.0 548.2 L476.0 548.2 L476.0 548.6 L477.0 548.6 L477.0 548.4 L478.0 548.4 L478.0 547.1 L479.0 547.1 L479.0 547.0 L480.0 547.0 L480.0 547.4 L481.0 547.4 L481.0 544.5 L482.0 544.5 L482.0 531.1 L483.0 531.1 L483.0 539.7 L484.0 539.7 L484.0 540.6 L485.0 540.6 L485.0 541.7 L486.0 541.7 L486.0 540.2 L487.0 540.2 L487.0 540.4 L488.0 540.4 L488.0 541.2 L489.0 541.2 L489.0 538.8 L490.0 538.8 L490.0 532.7 L491.0 532.7 L491.0 531.7 L492.0 531.7 L492.0 534.7 L493.0 534.7 L493.0 527.1 L494.0 527.1 L494.0 539.9 L495.0 539.9 L495.0 537.0 L496.0 537.0 L496.0 534.0 L497.0 534.0 L497.0 532.3 L498.0 532.3 L498.0 532.3 L499.0 532.3 L499.0 537.4 L500.0 537.4 L500.0 543.9 L501.0 543.9 L501.0 543.7 L502.0 543.7 L502.0 544.4 L503.0 544.4 L503.0 542.1 L504.0 542.1 L504.0 538.4 L505.0 538.4 L505.0 536.8 L506.0 536.8 L506.0 539.6 L507.0 539.6 L507.0 540.9 L508.0 540.9 L508.0 540.5 L509.0 540.5 L509.0 540.3 L510.0 540.3 L510.0 535.2 L511.0 535.2 L511.0 537.7 L512.0 537.7 L512.0 537.4 L513.0 537.4 L513.0 538.5 L514.0 538.5 L514.0 542.1 L515.0 542.1 L515.0 544.4 L516.0 544.4 L516.0 541.3 L517.0 541.3 L517.0 547.3 L518.0 547.3 L518.0 548.7 L519.0 548.7 L519.0 549.7 L520.0 549.7 L520.0 548.8 L521.0 548.8 L521.0 550.4 L522.0 550.4 L522.0 550.5 L523.0 550.5 L523.0 548.5 L524.0 548.5 L524.0 546.3 L525.0 546.3 L525.0 543.9 L526.0 543.9 L526.0 541.9 L527.0 541.9 L527.0 542.0 L528.0 542.0 L528.0 544.7 L529.0 544.7 L529.0 543.0 L530.0 543.0 L530.0 539.0 L531.0 539.0 L531.0 535.6 L532.0 535.6 L532.0 537.2 L533.0 537.2 L533.0 535.6 L534.0 535.6 L534.0 537.1 L535.0 537.1 L535.0 540.3 L536.0 540.3 L536.0 543.1 L537.0 543.1 L537.0 531.1 L538.0 531.1 L538.0 537.9 L539.0 537.9 L539.0 535.6 L540.0 535.6 L540.0 539.5 L541.0 539.5 L541.0 540.0 L542.0 540.0 L542.0 542.8 L543.0 542.8 L543.0 544.5 L544.0 544.5 L544.0 542.9 L545.0 542.9 L545.0 540.0 L546.0 540.0 L546.0 538.1 L547.0 538.1 L547.0 537.0 L548.0 537.0 L548.0 529.5 L549.0 529.5 L549.0 541.3 L550.0 541.3 L550.0 540.4 L551.0 540.4 L551.0 525.6 L552.0 525.6 L552.0 535.5 L553.0 535.5 L553.0 527.0 L554.0 527.0 L554.0 530.8 L555.0 530.8 L555.0 534.3 L556.0 534.3 L556.0 537.0 L557.0 537.0 L557.0 535.9 L558.0 535.9 L558.0 537.9 L559.0 537.9 L559.0 534.6 L560.0 534.6 L560.0 527.8 L561.0 527.8 L561.0 530.5 L562.0 530.5 L562.0 532.1 L563.0 532.1 L563.0 538.1 L564.0 538.1 L564.0 541.3 L565.0 541.3 L565.0 535.4 L566.0 535.4 L566.0 532.0 L567.0 532.0 L567.0 529.8 L568.0 529.8 L568.0 523.7 L569.0 523.7 L569.0 527.3 L570.0 527.3 L570.0 533.9 L571.0 533.9 L571.0 531.7 L572.0 531.7 L572.0 506.9 L573.0 506.9 L573.0 513.7 L574.0 513.7 L574.0 513.7 L575.0 513.7 L575.0 519.5 L576.0 519.5 L576.0 529.3 L577.0 529.3 L577.0 530.7 L578.0 530.7 L578.0 533.1 L579.0 533.1 L579.0 532.1 L580.0 532.1 L580.0 528.2 L581.0 528.2 L581.0 525.5 L582.0 525.5 L582.0 532.0 L583.0 532.0 L583.0 536.2 L584.0 536.2 L584.0 515.2 L585.0 515.2 L585.0 539.9 L586.0 539.9 L586.0 539.6 L587.0 539.6 L587.0 535.5 L588.0 535.5 L588.0 533.1 L589.0 533.1 L589.0 533.8 L590.0 533.8 L590.0 541.7 L591.0 541.7 L591.0 546.6 L592.0 546.6 L592.0 549.3 L593.0 549.3 L593.0 550.0 L594.0 550.0 L594.0 560.6 L593.0 560.6 L593.0 564.8 L592.0 564.8 L592.0 565.5 L591.0 565.5 L591.0 568.7 L590.0 568.7 L590.0 566.7 L589.0 566.7 L589.0 568.3 L588.0 568.3 L588.0 572.0 L587.0 572.0 L587.0 573.9 L586.0 573.9 L586.0 580.0 L585.0 580.0 L585.0 580.6 L584.0 580.6 L584.0 579.2 L583.0 579.2 L583.0 572.4 L582.0 572.4 L582.0 572.4 L581.0 572.4 L581.0 574.2 L580.0 574.2 L580.0 590.8 L579.0 590.8 L579.0 584.4 L578.0 584.4 L578.0 586.3 L577.0 586.3 L577.0 580.7 L576.0 580.7 L576.0 579.1 L575.0 579.1 L575.0 574.7 L574.0 574.7 L574.0 579.4 L573.0 579.4 L573.0 584.9 L572.0 584.9 L572.0 595.2 L571.0 595.2 L571.0 586.9 L570.0 586.9 L570.0 588.9 L569.0 588.9 L569.0 589.3 L568.0 589.3 L568.0 581.9 L567.0 581.9 L567.0 577.2 L566.0 577.2 L566.0 571.8 L565.0 571.8 L565.0 574.3 L564.0 574.3 L564.0 581.1 L563.0 581.1 L563.0 582.6 L562.0 582.6 L562.0 577.6 L561.0 577.6 L561.0 569.9 L560.0 569.9 L560.0 568.1 L559.0 568.1 L559.0 567.2 L558.0 567.2 L558.0 569.4 L557.0 569.4 L557.0 577.1 L556.0 577.1 L556.0 579.5 L555.0 579.5 L555.0 584.1 L554.0 584.1 L554.0 572.7 L553.0 572.7 L553.0 570.4 L552.0 570.4 L552.0 569.3 L551.0 569.3 L551.0 570.2 L550.0 570.2 L550.0 576.5 L549.0 576.5 L549.0 578.6 L548.0 578.6 L548.0 578.8 L547.0 578.8 L547.0 573.6 L546.0 573.6 L546.0 572.0 L545.0 572.0 L545.0 578.8 L544.0 578.8 L544.0 568.5 L543.0 568.5 L543.0 567.3 L542.0 567.3 L542.0 568.8 L541.0 568.8 L541.0 571.5 L540.0 571.5 L540.0 571.4 L539.0 571.4 L539.0 570.9 L538.0 570.9 L538.0 568.3 L537.0 568.3 L537.0 565.2 L536.0 565.2 L536.0 563.6 L535.0 563.6 L535.0 564.6 L534.0 564.6 L534.0 568.2 L533.0 568.2 L533.0 573.5 L532.0 573.5 L532.0 572.8 L531.0 572.8 L531.0 569.7 L530.0 569.7 L530.0 565.8 L529.0 565.8 L529.0 579.6 L528.0 579.6 L528.0 569.0 L527.0 569.0 L527.0 568.5 L526.0 568.5 L526.0 567.5 L525.0 567.5 L525.0 566.3 L524.0 566.3 L524.0 563.6 L523.0 563.6 L523.0 561.4 L522.0 561.4 L522.0 560.8 L521.0 560.8 L521.0 560.0 L520.0 560.0 L520.0 559.3 L519.0 559.3 L519.0 560.9 L518.0 560.9 L518.0 562.5 L517.0 562.5 L517.0 564.3 L516.0 564.3 L516.0 563.3 L515.0 563.3 L515.0 564.1 L514.0 564.1 L514.0 561.5 L513.0 561.5 L513.0 563.3 L512.0 563.3 L512.0 568.2 L511.0 568.2 L511.0 572.2 L510.0 572.2 L510.0 577.0 L509.0 577.0 L509.0 576.4 L508.0 576.4 L508.0 573.0 L507.0 573.0 L507.0 582.8 L506.0 582.8 L506.0 566.8 L505.0 566.8 L505.0 570.2 L504.0 570.2 L504.0 571.3 L503.0 571.3 L503.0 576.5 L502.0 576.5 L502.0 571.8 L501.0 571.8 L501.0 572.5 L500.0 572.5 L500.0 579.2 L499.0 579.2 L499.0 567.5 L498.0 567.5 L498.0 564.7 L497.0 564.7 L497.0 567.3 L496.0 567.3 L496.0 571.0 L495.0 571.0 L495.0 571.4 L494.0 571.4 L494.0 573.3 L493.0 573.3 L493.0 571.3 L492.0 571.3 L492.0 568.5 L491.0 568.5 L491.0 565.8 L490.0 565.8 L490.0 567.1 L489.0 567.1 L489.0 571.9 L488.0 571.9 L488.0 576.4 L487.0 576.4 L487.0 576.0 L486.0 576.0 L486.0 571.9 L485.0 571.9 L485.0 572.5 L484.0 572.5 L484.0 570.7 L483.0 570.7 L483.0 567.9 L482.0 567.9 L482.0 571.3 L481.0 571.3 L481.0 569.2 L480.0 569.2 L480.0 568.4 L479.0 568.4 L479.0 563.9 L478.0 563.9 L478.0 560.8 L477.0 560.8 L477.0 558.9 L476.0 558.9 L476.0 558.0 L475.0 558.0 L475.0 558.8 L474.0 558.8 L474.0 560.1 L473.0 560.1 L473.0 562.4 L472.0 562.4 L472.0 564.9 L471.0 564.9 L471.0 566.9 L470.0 566.9 L470.0 565.8 L469.0 565.8 L469.0 565.6 L468.0 565.6 L468.0 566.4 L467.0 566.4 L467.0 566.2 L466.0 566.2 L466.0 570.8 L465.0 570.8 L465.0 574.6 L464.0 574.6 L464.0 575.4 L463.0 575.4 L463.0 581.9 L462.0 581.9 L462.0 568.1 L461.0 568.1 L461.0 566.3 L460.0 566.3 L460.0 567.4 L459.0 567.4 L459.0 571.1 L458.0 571.1 L458.0 572.4 L457.0 572.4 L457.0 571.6 L456.0 571.6 L456.0 572.2 L455.0 572.2 L455.0 568.6 L454.0 568.6 L454.0 566.2 L453.0 566.2 L453.0 564.8 L452.0 564.8 L452.0 567.9 L451.0 567.9 L451.0 569.9 L450.0 569.9 L450.0 569.1 L449.0 569.1 L449.0 570.0 L448.0 570.0 L448.0 570.0 L447.0 570.0 L447.0 566.3 L446.0 566.3 L446.0 567.4 L445.0 567.4 L445.0 567.5 L444.0 567.5 L444.0 580.8 L443.0 580.8 L443.0 574.3 L442.0 574.3 L442.0 578.9 L441.0 578.9 L441.0 580.8 L440.0 580.8 L440.0 569.1 L439.0 569.1 L439.0 566.2 L438.0 566.2 L438.0 564.9 L437.0 564.9 L437.0 566.3 L436.0 566.3 L436.0 569.7 L435.0 569.7 L435.0 568.9 L434.0 568.9 L434.0 569.3 L433.0 569.3 L433.0 567.2 L432.0 567.2 L432.0 564.2 L431.0 564.2 L431.0 562.2 L430.0 562.2 L430.0 563.1 L429.0 563.1 L429.0 577.1 L428.0 577.1 L428.0 569.1 L427.0 569.1 L427.0 569.2 L426.0 569.2 L426.0 571.8 L425.0 571.8 L425.0 567.9 L424.0 567.9 L424.0 565.5 L423.0 565.5 L423.0 566.2 L422.0 566.2 L422.0 571.4 L421.0 571.4 L421.0 574.0 L420.0 574.0 L420.0 577.2 L419.0 577.2 L419.0 575.9 L418.0 575.9 L418.0 572.2 L417.0 572.2 L417.0 569.3 L416.0 569.3 L416.0 566.9 L415.0 566.9 L415.0 566.5 L414.0 566.5 L414.0 565.6 L413.0 565.6 L413.0 566.8 L412.0 566.8 L412.0 565.1 L411.0 565.1 L411.0 561.9 L410.0 561.9 L410.0 558.2 L409.0 558.2 Z" fill="#3333c9"/><path d="M409.5 551.1 L410.5 550.8 L411.5 549.8 L412.5 548.5 L413.5 549.1 L414.5 548.4 L415.5 549.0 L416.5 548.4 L417.5 548.4 L418.5 548.0 L419.5 548.9 L420.5 547.7 L421.5 547.4 L422.5 547.6 L423.5 548.3 L424.5 548.6 L425.5 548.1 L426.5 548.1 L427.5 548.8 L428.5 548.6 L429.5 549.4 L430.5 548.5 L431.5 548.5 L432.5 549.4 L433.5 548.6 L434.5 548.9 L435.5 549.0 L436.5 548.6 L437.5 548.0 L438.5 549.2 L439.5 549.1 L440.5 548.2 L441.5 549.0 L442.5 547.8 L443.5 548.8 L444.5 548.4 L445.5 547.7 L446.5 547.7 L447.5 548.7 L448.5 548.1 L449.5 548.8 L450.5 548.3 L451.5 548.9 L452.5 547.3 L453.5 548.0 L454.5 548.8 L455.5 547.7 L456.5 548.5 L457.5 547.2 L458.5 547.7 L459.5 548.7 L460.5 547.2 L461.5 547.8 L462.5 548.7 L463.5 549.0 L464.5 548.0 L465.5 547.6 L466.5 548.1 L467.5 549.0 L468.5 548.1 L469.5 548.5 L470.5 548.8 L471.5 549.2 L472.5 550.1 L473.5 550.2 L474.5 550.8 L475.5 550.7 L476.5 550.9 L477.5 550.5 L478.5 550.2 L479.5 549.3 L480.5 549.0 L481.5 548.4 L482.5 548.9 L483.5 547.5 L484.5 548.1 L485.5 548.4 L486.5 548.5 L487.5 547.6 L488.5 548.4 L489.5 547.9 L490.5 547.7 L491.5 547.1 L492.5 547.0 L493.5 546.9 L494.5 548.2 L495.5 547.5 L496.5 547.5 L497.5 548.7 L498.5 548.3 L499.5 548.3 L500.5 548.7 L501.5 547.8 L502.5 548.5 L503.5 548.6 L504.5 548.7 L505.5 547.3 L506.5 547.1 L507.5 548.0 L508.5 547.1 L509.5 547.3 L510.5 547.4 L511.5 549.0 L512.5 549.2 L513.5 548.5 L514.5 549.3 L515.5 548.9 L516.5 550.1 L517.5 550.3 L518.5 550.8 L519.5 550.6 L520.5 550.7 L521.5 550.3 L522.5 550.3 L523.5 550.1 L524.5 550.0 L525.5 549.7 L526.5 549.4 L527.5 547.8 L528.5 549.1 L529.5 548.0 L530.5 548.6 L531.5 548.6 L532.5 549.1 L533.5 547.9 L534.5 549.1 L535.5 548.6 L536.5 547.7 L537.5 547.9 L538.5 547.9 L539.5 548.7 L540.5 548.4 L541.5 548.3 L542.5 548.0 L543.5 548.0 L544.5 548.7 L545.5 548.3 L546.5 548.6 L547.5 546.8 L548.5 547.9 L549.5 547.0 L550.5 547.9 L551.5 548.3 L552.5 548.1 L553.5 547.6 L554.5 545.9 L555.5 547.2 L556.5 547.0 L557.5 547.6 L558.5 546.1 L559.5 547.5 L560.5 545.6 L561.5 545.1 L562.5 546.3 L563.5 546.4 L564.5 546.1 L565.5 545.3 L566.5 545.0 L567.5 545.9 L568.5 545.6 L569.5 546.5 L570.5 545.2 L571.5 546.1 L572.5 544.1 L573.5 544.4 L574.5 545.8 L575.5 545.6 L576.5 546.5 L577.5 544.2 L578.5 545.9 L579.5 546.1 L580.5 545.6 L581.5 545.0 L582.5 544.7 L583.5 545.0 L584.5 546.0 L585.5 545.7 L586.5 546.1 L587.5 547.4 L588.5 547.4 L589.5 548.0 L590.5 548.3 L591.5 550.0 L592.5 550.0 L593.5 551.0 L593.5 558.4 L592.5 558.8 L591.5 560.5 L590.5 561.2 L589.5 561.9 L588.5 561.1 L587.5 562.2 L586.5 562.2 L585.5 563.9 L584.5 564.6 L583.5 564.0 L582.5 562.8 L581.5 564.5 L580.5 562.9 L579.5 563.2 L578.5 563.4 L577.5 564.7 L576.5 563.6 L575.5 564.0 L574.5 564.7 L573.5 565.9 L572.5 565.6 L571.5 564.0 L570.5 564.2 L569.5 565.2 L568.5 564.8 L567.5 565.4 L566.5 564.6 L565.5 563.2 L564.5 565.0 L563.5 563.7 L562.5 563.8 L561.5 562.1 L560.5 562.1 L559.5 562.5 L558.5 563.6 L557.5 562.0 L556.5 563.4 L555.5 563.5 L554.5 563.1 L553.5 562.4 L552.5 563.1 L551.5 562.0 L550.5 561.1 L549.5 561.9 L548.5 562.5 L547.5 562.0 L546.5 560.7 L545.5 561.5 L544.5 560.7 L543.5 561.2 L542.5 561.4 L541.5 561.2 L540.5 561.7 L539.5 561.3 L538.5 561.4 L537.5 560.9 L536.5 561.4 L535.5 560.5 L534.5 561.3 L533.5 561.6 L532.5 561.4 L531.5 560.6 L530.5 561.4 L529.5 560.8 L528.5 560.7 L527.5 560.3 L526.5 560.6 L525.5 560.4 L524.5 559.6 L523.5 559.7 L522.5 559.0 L521.5 558.8 L520.5 559.1 L519.5 558.5 L518.5 558.7 L517.5 559.3 L516.5 559.2 L515.5 560.5 L514.5 560.7 L513.5 559.9 L512.5 561.2 L511.5 560.4 L510.5 560.8 L509.5 560.6 L508.5 561.7 L507.5 560.7 L506.5 561.6 L505.5 560.6 L504.5 560.7 L503.5 562.2 L502.5 560.8 L501.5 561.8 L500.5 561.4 L499.5 562.4 L498.5 561.2 L497.5 561.5 L496.5 561.6 L495.5 562.2 L494.5 560.9 L493.5 562.4 L492.5 562.4 L491.5 561.4 L490.5 562.3 L489.5 561.0 L488.5 560.9 L487.5 562.3 L486.5 562.0 L485.5 562.2 L484.5 562.1 L483.5 560.9 L482.5 561.2 L481.5 560.7 L480.5 560.4 L479.5 559.3 L478.5 559.2 L477.5 558.3 L476.5 558.7 L475.5 558.4 L474.5 558.4 L473.5 559.2 L472.5 559.0 L471.5 560.0 L470.5 559.6 L469.5 560.1 L468.5 560.8 L467.5 561.2 L466.5 561.6 L465.5 561.0 L464.5 560.6 L463.5 561.7 L462.5 560.8 L461.5 562.0 L460.5 561.6 L459.5 562.0 L458.5 562.2 L457.5 560.5 L456.5 561.0 L455.5 561.5 L454.5 561.2 L453.5 560.5 L452.5 561.7 L451.5 561.8 L450.5 561.4 L449.5 561.7 L448.5 561.0 L447.5 561.0 L446.5 560.4 L445.5 561.9 L444.5 560.9 L443.5 560.9 L442.5 561.2 L441.5 561.4 L440.5 560.5 L439.5 561.3 L438.5 561.4 L437.5 560.5 L436.5 560.2 L435.5 560.4 L434.5 560.5 L433.5 560.3 L432.5 561.1 L431.5 560.7 L430.5 560.2 L429.5 560.5 L428.5 560.4 L427.5 560.9 L426.5 561.0 L425.5 561.5 L424.5 561.6 L423.5 561.6 L422.5 561.9 L421.5 561.0 L420.5 562.0 L419.5 561.1 L418.5 562.1 L417.5 560.7 L416.5 561.1 L415.5 560.4 L414.5 560.3 L413.5 559.9 L412.5 560.1 L411.5 559.3 L410.5 558.7 L409.5 558.1 Z" fill="#6666dd"/><path d="M407 412.5 H410 M407 554.5 H410" stroke="#d8c840" stroke-width="1"/></svg>
<div id="menu" class="w"></div>
<div class="w" style="left:594px;top:229px;width:292px;height:1px;background:#c8c8c8"></div>
<div class="w" style="left:594px;top:760px;width:292px;height:2px;background:#e0e0e0"></div>
<div id="fadehl" class="w"></div>
<div class="me" style="top:207px;color:#b4b0ac;letter-spacing:0.775px">Repeat Last Effect</div>
<div class="me" style="left:837px;top:207px;color:#b4b0ac;letter-spacing:0.874px">Ctrl+R</div>
<div class="me" style="top:235.5px;color:#1e1e1e;letter-spacing:0.45px">Amplify...</div>
<div class="me" style="top:257.4px;color:#1e1e1e;letter-spacing:0.45px">Auto Duck...</div>
<div class="me" style="top:279.2px;color:#1e1e1e;letter-spacing:0.45px">BassBoost...</div>
<div class="me" style="top:301.1px;color:#1e1e1e;letter-spacing:0.45px">Change Pitch...</div>
<div class="me" style="top:323.0px;color:#1e1e1e;letter-spacing:0.45px">Change Speed...</div>
<div class="me" style="top:344.8px;color:#1e1e1e;letter-spacing:0.45px">Change Tempo...</div>
<div class="me" style="top:366.7px;color:#1e1e1e;letter-spacing:0.45px">Click Removal...</div>
<div class="me" style="top:388.6px;color:#1e1e1e;letter-spacing:0.45px">Compressor...</div>
<div class="me" style="top:410.5px;color:#1e1e1e;letter-spacing:0.45px">Echo...</div>
<div class="me" style="top:432.3px;color:#1e1e1e;letter-spacing:0.45px">Equalization...</div>
<div class="me" style="top:454.2px;color:#f0f5fb;letter-spacing:0.45px">Fade In</div>
<div class="me" style="top:476.1px;color:#1e1e1e;letter-spacing:0.45px">Fade Out</div>
<div class="me" style="top:497.9px;color:#1e1e1e;letter-spacing:0.45px">Invert</div>
<div class="me" style="top:519.8px;color:#1e1e1e;letter-spacing:0.45px">Leveller...</div>
<div class="me" style="top:541.7px;color:#1e1e1e;letter-spacing:0.45px">Noise Removal...</div>
<div class="me" style="top:563.5px;color:#1e1e1e;letter-spacing:0.45px">Normalize...</div>
<div class="me" style="top:585.4px;color:#1e1e1e;letter-spacing:0.45px">Nyquist Prompt...</div>
<div class="me" style="top:607.3px;color:#1e1e1e;letter-spacing:0.45px">Phaser...</div>
<div class="me" style="top:629.2px;color:#1e1e1e;letter-spacing:0.45px">Repair</div>
<div class="me" style="top:651.0px;color:#1e1e1e;letter-spacing:0.45px">Repeat...</div>
<div class="me" style="top:672.9px;color:#1e1e1e;letter-spacing:0.45px">Reverse</div>
<div class="me" style="top:694.8px;color:#1e1e1e;letter-spacing:0.45px">Sliding Time Scale/Pitch Shift...</div>
<div class="me" style="top:716.6px;color:#1e1e1e;letter-spacing:0.45px">Truncate Silence...</div>
<div class="me" style="top:738.5px;color:#1e1e1e;letter-spacing:0.45px">Wahwah...</div>
<div class="me" style="top:767px;letter-spacing:0.45px">Plugins 1 to 10</div>
<svg class="w" style="left:874px;top:768px" width="9" height="14" viewBox="0 0 9 14"><path d="M1.5 1.5 L7.5 7 L1.5 12.5" stroke="#1a1a1a" stroke-width="1.8" fill="none"/></svg>
<div class="it" style="left:296.7px;top:342.0px;font-size:11px;letter-spacing:0.587px">myaudio</div>
<div class="it" style="left:282.2px;top:359.7px;font-size:10.5px;letter-spacing:0.443px">Stereo, 44100Hz</div>
<div class="it" style="left:282.3px;top:376.2px;font-size:10.5px;letter-spacing:0.634px">32-bit float</div>
<div class="it" style="left:289.2px;top:391.2px;font-size:10.5px;letter-spacing:0.719px">Mute</div>
<div class="it" style="left:335.6px;top:391.2px;font-size:10.5px;letter-spacing:0.612px">Solo</div>
</body></html>
